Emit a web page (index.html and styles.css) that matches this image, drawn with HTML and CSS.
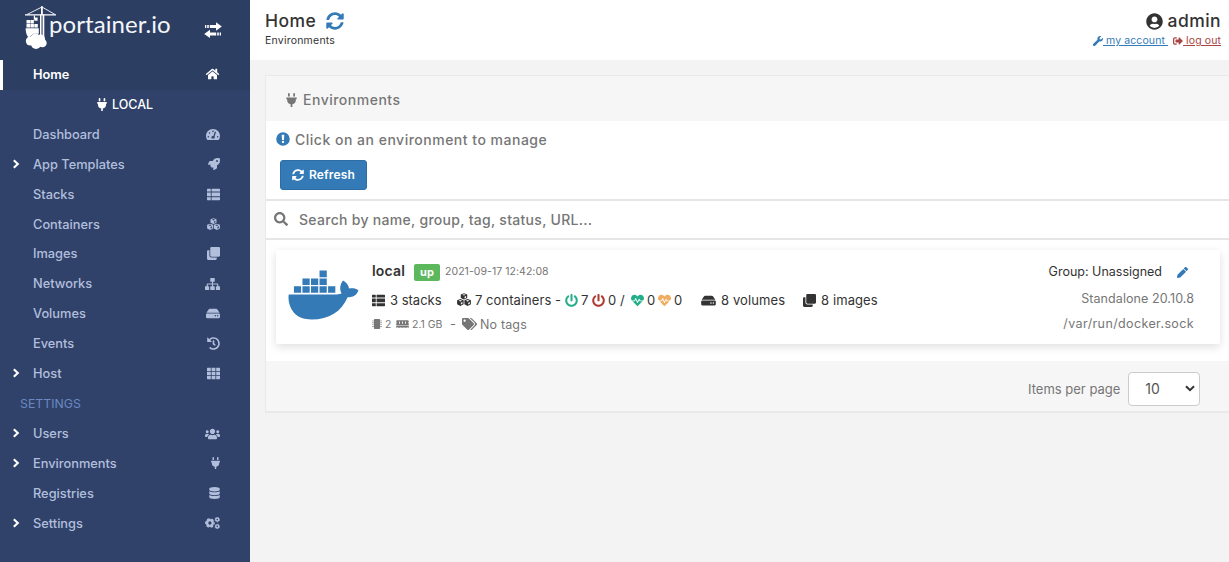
FILE: index.html
```
<!DOCTYPE html>
<html lang="en">
<head>
<meta charset="utf-8">
<title>Portainer</title>
<link rel="stylesheet" href="styles.css">
</head>
<body>
<svg class="defs" aria-hidden="true">
  <symbol id="home" viewBox="0 0 576 512"><path d="M280.37 148.26L96 300.11V464a16 16 0 0 0 16 16l112.06-.29a16 16 0 0 0 15.92-16V368a16 16 0 0 1 16-16h64a16 16 0 0 1 16 16v95.64a16 16 0 0 0 16 16.05L464 480a16 16 0 0 0 16-16V300L295.67 148.26a12.19 12.19 0 0 0-15.3 0zM571.6 251.47L488 182.56V44.05a12 12 0 0 0-12-12h-56a12 12 0 0 0-12 12v72.61L318.47 43a48 48 0 0 0-61 0L4.34 251.47a12 12 0 0 0-1.6 16.9l25.5 31A12 12 0 0 0 45.15 301l235.22-193.74a12.19 12.19 0 0 1 15.3 0L530.9 301a12 12 0 0 0 16.9-1.6l25.5-31a12 12 0 0 0-1.7-16.93z"/></symbol>
  <symbol id="plug" viewBox="0 0 384 512"><path d="M320 32a32 32 0 0 0-64 0v96h64zm48 128H16a16 16 0 0 0-16 16v32a16 16 0 0 0 16 16h16v32a160.07 160.07 0 0 0 128 156.8V512h64v-99.2A160.07 160.07 0 0 0 352 256v-32h16a16 16 0 0 0 16-16v-32a16 16 0 0 0-16-16zM128 32a32 32 0 0 0-64 0v96h64z"/></symbol>
  <symbol id="gauge" viewBox="0 0 576 512"><path fill-rule="evenodd" d="M288 32C129 32 0 161 0 320c0 53 14 102 39 145 6 10 16 15 27 15h444c11 0 21-5 27-15 25-43 39-92 39-145 0-159-129-288-288-288zM288 96a32 32 0 1 1 0 64 32 32 0 0 1 0-64zM96 384a32 32 0 1 1 0-64 32 32 0 0 1 0 64zM144 224a32 32 0 1 1 0-64 32 32 0 0 1 0 64zM480 320a32 32 0 1 1 0 64 32 32 0 0 1 0-64zM367 137l46 14-62 188c16 15 4 54-8 77H233c-20-37-5-95 55-96h17z"/></symbol>
  <symbol id="rocket" viewBox="0 0 512 512"><path d="M505.12 19.09c-1.19-5.53-6.66-11-12.21-12.19C460.716 0 435.507 0 410.407 0 307.175 0 245.269 55.2 199.05 128H94.838c-16.35 0-35.56 11.88-42.89 26.48L2.516 253.3A28.4 28.4 0 0 0 0 264a24 24 0 0 0 24 24h103.8l-22.47 22.47c-11.36 11.36-13 32.26 0 45.25l50.9 50.9c11.16 11.19 32.16 13.16 45.28 0L224 384.16V488a24 24 0 0 0 24 24 28.6 28.6 0 0 0 10.7-2.52l98.73-49.39c14.63-7.29 26.51-26.5 26.51-42.86V312.8C456.6 266.5 512 204.4 512 101.7c0-25.2 0-50.4-6.9-82.6zM384 168a40 40 0 1 1 40-40 40 40 0 0 1-40 40z"/></symbol>
  <symbol id="thlist" viewBox="0 0 512 512"><path d="M24 32h101a24 24 0 0 1 24 24v80H0V56a24 24 0 0 1 24-24zM181 32h307a24 24 0 0 1 24 24v80H181zM0 181h149v144H0zM181 181h331v144H181zM0 368h149v112H24a24 24 0 0 1-24-24zM181 368h331v88a24 24 0 0 1-24 24H181z"/></symbol>
  <symbol id="cubes" viewBox="0 0 512 512"><path fill-rule="evenodd" d="M256 6l118 46v134l-118 54-118-54V52zM256 44l-66 24 66 26 66-26zM276 134v64l56-26v-62zM122 222l120 46v144l-120 64-118-62V268zM122 260l-64 24 64 28 64-28zM142 352v70l58-32v-62zM390 222l118 46v144l-118 64-120-62V268zM390 260l-64 24 64 28 64-28zM410 352v70l58-32v-62z"/></symbol>
  <symbol id="clone" viewBox="0 0 512 512"><path d="M464 0c26.51 0 48 21.49 48 48v288c0 26.51-21.49 48-48 48H176c-26.51 0-48-21.49-48-48V48c0-26.51 21.49-48 48-48h288M176 416c-44.112 0-80-35.888-80-80V128H48c-26.51 0-48 21.49-48 48v288c0 26.51 21.49 48 48 48h288c26.51 0 48-21.49 48-48v-48H176z"/></symbol>
  <symbol id="sitemap" viewBox="0 0 640 512"><path d="M248 0h144a24 24 0 0 1 24 24v112a24 24 0 0 1-24 24h-48v72h184a40 40 0 0 1 40 40v80h48a24 24 0 0 1 24 24v112a24 24 0 0 1-24 24H488a24 24 0 0 1-24-24V376a24 24 0 0 1 24-24h32v-72H344v72h48a24 24 0 0 1 24 24v112a24 24 0 0 1-24 24H248a24 24 0 0 1-24-24V376a24 24 0 0 1 24-24h48v-72H120v72h32a24 24 0 0 1 24 24v112a24 24 0 0 1-24 24H24a24 24 0 0 1-24-24V376a24 24 0 0 1 24-24h48v-80a40 40 0 0 1 40-40h184v-72h-48a24 24 0 0 1-24-24V24a24 24 0 0 1 24-24z"/></symbol>
  <symbol id="hdd" viewBox="0 0 576 512"><path d="M576 304v96c0 26.51-21.49 48-48 48H48c-26.51 0-48-21.49-48-48v-96c0-26.51 21.49-48 48-48h480c26.51 0 48 21.49 48 48zm-48-80a79.557 79.557 0 0 1 30.777 6.165L462.25 85.374A48.003 48.003 0 0 0 422.311 64H153.689a48 48 0 0 0-39.938 21.374L17.223 230.165A79.557 79.557 0 0 1 48 224h480zm-48 96c-17.673 0-32 14.327-32 32s14.327 32 32 32 32-14.327 32-32-14.327-32-32-32zm-96 0c-17.673 0-32 14.327-32 32s14.327 32 32 32 32-14.327 32-32-14.327-32-32-32z"/></symbol>
  <symbol id="history" viewBox="0 0 512 512"><path d="M504 255.531c.253 136.64-111.18 248.372-247.82 248.468-59.015.042-113.223-20.53-155.822-54.911-11.077-8.94-11.905-25.541-1.839-35.607l11.267-11.267c8.609-8.609 22.353-9.551 31.891-1.984C173.062 425.135 212.781 440 256 440c101.705 0 184-82.311 184-184 0-101.705-82.311-184-184-184-48.814 0-93.149 18.969-126.068 49.932l50.754 50.754c10.08 10.08 2.941 27.314-11.313 27.314H24c-8.837 0-16-7.163-16-16V38.627c0-14.254 17.234-21.393 27.314-11.314l49.372 49.372C129.209 34.136 189.552 8 256 8c136.81 0 247.747 110.78 248 247.531zm-180.912 78.784l9.823-12.63c8.138-10.463 6.253-25.542-4.21-33.679L288 256.349V152c0-13.255-10.745-24-24-24h-16c-13.255 0-24 10.745-24 24v135.651l65.409 50.874c10.463 8.137 25.541 6.253 33.679-4.21z"/></symbol>
  <symbol id="grid" viewBox="0 0 512 512"><path d="M24 32h125v123H0V56a24 24 0 0 1 24-24zM181 32h150v123H181zM363 32h125a24 24 0 0 1 24 24v99H363zM0 187h149v138H0zM181 187h150v138H181zM363 187h149v138H363zM0 357h149v123H24a24 24 0 0 1-24-24zM181 357h150v123H181zM363 357h149v99a24 24 0 0 1-24 24H363z"/></symbol>
  <symbol id="users" viewBox="0 0 640 512"><path d="M96 224c35.3 0 64-28.7 64-64s-28.7-64-64-64-64 28.7-64 64 28.7 64 64 64zm448 0c35.3 0 64-28.7 64-64s-28.7-64-64-64-64 28.7-64 64 28.7 64 64 64zm32 32h-64c-17.6 0-33.5 7.1-45.1 18.6 40.3 22.1 68.9 62 75.1 109.4h66c17.7 0 32-14.3 32-32v-32c0-35.3-28.7-64-64-64zm-256 0c61.9 0 112-50.1 112-112S381.9 32 320 32 208 82.1 208 144s50.1 112 112 112zm76.8 32h-8.3c-20.8 10-43.9 16-68.5 16s-47.6-6-68.5-16h-8.3C179.6 288 128 339.6 128 403.2V432c0 26.5 21.5 48 48 48h288c26.5 0 48-21.5 48-48v-28.8c0-63.6-51.6-115.2-115.2-115.2zm-223.7-13.4C161.5 263.1 145.6 256 128 256H64c-35.3 0-64 28.7-64 64v32c0 17.7 14.3 32 32 32h65.9c6.3-47.4 34.9-87.3 75.2-109.4z"/></symbol>
  <symbol id="database" viewBox="0 0 448 512"><path d="M448 73.143v45.714C448 159.143 347.667 192 224 192S0 159.143 0 118.857V73.143C0 32.857 100.333 0 224 0s224 32.857 224 73.143zM448 176v102.857C448 319.143 347.667 352 224 352S0 319.143 0 278.857V176c48.125 33.143 136.208 48.572 224 48.572S399.874 209.143 448 176zm0 160v102.857C448 479.143 347.667 512 224 512S0 479.143 0 438.857V336c48.125 33.143 136.208 48.572 224 48.572S399.874 369.143 448 336z"/></symbol>
  <symbol id="cogs" viewBox="0 0 640 512"><g fill="none" stroke="currentColor"><circle cx="210" cy="256" r="120" stroke-width="100"/><circle cx="210" cy="256" r="184" stroke-width="48" stroke-dasharray="110 82.7" stroke-dashoffset="55"/><circle cx="524" cy="110" r="66" stroke-width="62"/><circle cx="524" cy="110" r="102" stroke-width="22" stroke-dasharray="60 46.8"/><circle cx="524" cy="402" r="66" stroke-width="62"/><circle cx="524" cy="402" r="102" stroke-width="22" stroke-dasharray="60 46.8"/></g></symbol>
  <symbol id="sync" viewBox="0 0 512 512"><path d="M370.72 133.28C339.458 104.008 298.888 87.962 255.848 88c-77.458.068-144.328 53.178-162.791 126.85-1.344 5.363-6.122 9.15-11.651 9.15H24.103c-7.498 0-13.194-6.807-11.807-14.176C33.933 94.924 134.813 8 256 8c66.448 0 126.791 26.136 171.315 68.685L463.03 40.97C478.149 25.851 504 36.559 504 57.941V192c0 13.255-10.745 24-24 24H345.941c-21.382 0-32.09-25.851-16.971-40.971l41.75-41.749zM32 296h134.059c21.382 0 32.09 25.851 16.971 40.971l-41.75 41.75c31.262 29.273 71.835 45.319 114.876 45.28 77.418-.07 144.315-53.144 162.787-126.849 1.344-5.363 6.122-9.15 11.651-9.15h57.304c7.498 0 13.194 6.807 11.807 14.176C478.067 417.076 377.187 504 256 504c-66.448 0-126.791-26.136-171.315-68.685L48.97 471.03C33.851 486.149 8 475.441 8 454.059V320c0-13.255 10.745-24 24-24z"/></symbol>
  <symbol id="search" viewBox="0 0 512 512"><path d="M505 442.7L405.3 343c-4.5-4.5-10.6-7-17-7H372c27.6-35.3 44-79.7 44-128C416 93.1 322.9 0 208 0S0 93.1 0 208s93.1 208 208 208c48.3 0 92.7-16.4 128-44v16.3c0 6.4 2.5 12.5 7 17l99.7 99.7c9.4 9.4 24.6 9.4 33.9 0l28.3-28.3c9.4-9.4 9.4-24.6.1-34zM208 336c-70.7 0-128-57.2-128-128 0-70.7 57.2-128 128-128 70.7 0 128 57.2 128 128 0 70.7-57.2 128-128 128z"/></symbol>
  <symbol id="power" viewBox="0 0 512 512"><path d="M400 54.1c63 45 104 118.6 104 201.9 0 136.8-110.8 247.7-247.5 248C120 504.3 8.2 393 8 256.4 7.9 173.1 48.9 99.3 111.8 54.2c11.7-8.3 28-4.8 35 7.7L162.6 90c5.9 10.5 3.1 23.8-6.6 31-41.5 30.8-68 79.6-68 134.9-.1 92.3 74.5 168.1 168 168.1 91.6 0 168.6-74.2 168-169.1-.3-51.8-24.7-101.8-68.1-134-9.7-7.2-12.4-20.5-6.5-30.9l15.8-28.1c7-12.4 23.2-16.1 34.8-7.8zM296 264V24c0-13.3-10.7-24-24-24h-32c-13.3 0-24 10.7-24 24v240c0 13.3 10.7 24 24 24h32c13.3 0 24-10.7 24-24z"/></symbol>
  <symbol id="heart" viewBox="0 0 512 512"><path d="M320.2 243.8l-49.7 99.4c-6 12.1-23.4 11.7-28.9-.6l-56.9-126.3-30 71.7H60.6l182.5 186.5c7.1 7.3 18.6 7.3 25.7 0L451.4 288H342.3l-22.1-44.2zM473.7 73.9l-2.4-2.5c-51.5-52.6-135.8-52.6-187.4 0L256 100l-27.9-28.5c-51.5-52.7-135.9-52.7-187.4 0l-2.4 2.4C-10.4 123.7-12.5 203 31 256h102.4l35.9-86.2c5.4-12.9 23.6-13.1 29.2-.4l58.2 129.3 49-97.9c5.9-11.8 22.7-11.8 28.6 0l27.6 55.2H481c43.5-53 41.4-132.3-7.3-182.1z"/></symbol>
  <symbol id="tags" viewBox="0 0 640 512"><path d="M497.941 225.941L286.059 14.059A48 48 0 0 0 252.118 0H48C21.49 0 0 21.49 0 48v204.118a48 48 0 0 0 14.059 33.941l211.882 211.882c18.744 18.745 49.136 18.746 67.882 0l204.118-204.118c18.745-18.745 18.745-49.137 0-67.882zM112 160c-26.51 0-48-21.49-48-48s21.49-48 48-48 48 21.49 48 48-21.49 48-48 48zm513.941 133.823L421.823 497.941c-18.745 18.745-49.137 18.745-67.882 0l-.36-.36L527.64 323.522c16.999-16.999 26.36-39.6 26.36-63.64s-9.362-46.641-26.36-63.64L331.397 0h48.721a48 48 0 0 1 33.941 14.059l211.882 211.882c18.745 18.745 18.745 49.137 0 67.882z"/></symbol>
  <symbol id="user" viewBox="0 0 496 512"><path d="M248 8C111 8 0 119 0 256s111 248 248 248 248-111 248-248S385 8 248 8zm0 96c48.6 0 88 39.4 88 88s-39.4 88-88 88-88-39.4-88-88 39.4-88 88-88zm0 344c-58.7 0-111.3-26.6-146.5-68.2 18.8-35.4 55.6-59.8 98.5-59.8 2.4 0 4.8.4 7.1 1.1 13 4.2 26.6 6.9 40.9 6.9 14.3 0 28-2.7 40.9-6.9 2.3-.7 4.7-1.1 7.1-1.1 42.9 0 79.7 24.4 98.5 59.8C359.3 421.4 306.7 448 248 448z"/></symbol>
  <symbol id="wrench" viewBox="0 0 512 512"><path d="M507.73 109.1c-2.24-9.03-13.54-12.09-20.12-5.51l-74.36 74.36-67.88-11.31-11.31-67.88 74.36-74.36c6.62-6.62 3.43-17.9-5.66-20.16-47.38-11.74-99.55.91-136.58 37.93-39.64 39.64-50.55 97.1-34.05 147.2L18.74 402.76c-24.99 24.99-24.99 65.51 0 90.5 24.99 24.99 65.51 24.99 90.5 0l213.21-213.21c50.12 16.71 107.47 5.68 147.37-34.22 37.07-37.07 49.7-89.32 37.91-136.73z"/></symbol>
  <symbol id="signout" viewBox="0 0 512 512"><path d="M497 273L329 441c-15 15-41 4.5-41-17v-96H152c-13.3 0-24-10.7-24-24v-96c0-13.3 10.7-24 24-24h136V88c0-21.4 25.9-32 41-17l168 168c9.3 9.4 9.3 24.6 0 34zM192 436v-40c0-6.6-5.4-12-12-12H96c-17.7 0-32-14.3-32-32V160c0-17.7 14.3-32 32-32h84c6.6 0 12-5.4 12-12V76c0-6.6-5.4-12-12-12H96c-53 0-96 43-96 96v192c0 53 43 96 96 96h84c6.6 0 12-5.4 12-12z"/></symbol>
  <symbol id="pencil" viewBox="0 0 512 512"><path d="M497.9 142.1l-46.1 46.1c-4.7 4.7-12.3 4.7-17 0l-111-111c-4.7-4.7-4.7-12.3 0-17l46.1-46.1c18.7-18.7 49.1-18.7 67.9 0l60.1 60.1c18.8 18.7 18.8 49.1 0 67.9zM284.2 99.8L21.6 362.4.4 483.9c-2.9 16.4 11.4 30.6 27.8 27.8l121.5-21.3 262.6-262.6c4.7-4.7 4.7-12.3 0-17l-111-111c-4.8-4.7-12.4-4.7-17.1 0z"/></symbol>
  <symbol id="alert" viewBox="0 0 512 512"><path fill-rule="evenodd" d="M256 8a248 248 0 1 1 0 496 248 248 0 0 1 0-496zM208 100h96l-12 192h-72zM256 318a44 44 0 1 1 0 88 44 44 0 0 1 0-88z"/></symbol>
  <symbol id="chip" viewBox="0 0 512 512"><path d="M144 0h224a48 48 0 0 1 48 48v416a48 48 0 0 1-48 48H144a48 48 0 0 1-48-48V48a48 48 0 0 1 48-48zM16 72h56v48H16zM16 168h56v48H16zM16 264h56v48H16zM16 360h56v48H16zM440 72h56v48h-56zM440 168h56v48h-56zM440 264h56v48h-56zM440 360h56v48h-56z"/></symbol>
  <symbol id="memory" viewBox="0 0 640 512"><path fill-rule="evenodd" d="M32 64h576l32 32v60a38 38 0 0 0 0 72v92H0v-92a38 38 0 0 0 0-72V96zM140 128v112h44V128zM298 128v112h44V128zM456 128v112h44V128zM0 344h640v104h-64v-40h-32v40H416v-40h-32v40H256v-40h-32v40H96v-40H64v40H0z"/></symbol>
  <symbol id="docker" viewBox="0 0 640 512"><path d="M349.9 236.3h-66.1v-59.4h66.1v59.4zm0-204.3h-66.1v60.7h66.1V32zm78.2 144.8H362v59.4h66.1v-59.4zm-156.3-72.1h-66.1v60.1h66.1v-60.1zm78.1 0h-66.1v60.1h66.1v-60.1zm276.8 100c-14.4-9.7-47.6-13.2-73.1-8.4-3.3-24-16.7-44.9-41.1-63.7l-14-9.3-9.3 14c-18.4 27.8-23.4 73.6-3.7 103.8-8.7 4.7-25.8 11.1-48.4 10.7H2.4c-8.7 50.8 5.8 116.8 44 162.1 37.1 43.9 92.7 66.2 165.4 66.2 157.4 0 273.9-72.5 328.4-204.2 21.4.4 67.6.1 91.3-45.2 1.5-2.5 6.6-13.2 8.5-17.1l-13.3-8.9zm-511.1-27.9h-66v59.4h66.1v-59.4zm78.1 0h-66.1v59.4h66.1v-59.4zm78.1 0h-66.1v59.4h66.1v-59.4zm-78.1-72.1h-66.1v60.1h66.1v-60.1z"/></symbol>
  <symbol id="chevron" viewBox="0 0 8 10"><path d="M1.8 1.2L5.8 5l-4 3.8" fill="none" stroke="currentColor" stroke-width="2.1"/></symbol>
</svg>

<div class="app">
  <aside class="sidebar">
    <div class="brand">
      <svg class="crane" viewBox="0 0 32 44" fill="currentColor">
        <path d="M0 8.2h31v1.4H0zM16 .3h1.8v8H16z"/>
        <path d="M17 1L2 8.5M17 1l13 7.5" fill="none" stroke="currentColor" stroke-width=".9"/>
        <path d="M15 8.5h1.5V30H15zM17.6 8.5h1.7V31h-1.7zM8.8 9.5h1.2v4H8.8z"/>
        <path d="M9.4 11.5h3.2v3.2H9.4zM1.5 14h3.5v3.6H1.5zM5.4 14h3.5v3.6H5.4zM1.5 18h3.5v3.6H1.5zM5.4 18h3.5v3.6H5.4zM9.3 18h3.5v3.6H9.3z"/>
        <path d="M.6 22.3h13.2v5.5H8.3L4 31.5C2 30.5.8 27 .6 22.3z"/>
        <circle cx="5.4" cy="35" r="4.6"/><circle cx="10.5" cy="32.5" r="5"/><circle cx="15.5" cy="33" r="4.6"/><circle cx="17.4" cy="37" r="4.3"/><circle cx="11" cy="38" r="5"/>
      </svg>
      <span class="wordmark">portainer.io</span>
      <svg class="toggle" viewBox="0 0 18 16" fill="currentColor"><path d="M1 3h1.3v3H1zM3.2 3h1.6v3H3.2zM5.8 3H12V.2L17.8 4.5 12 8.8V6H5.8zM17 10.5h-1.3v3H17zM14.8 10.5h-1.6v3h1.6zM12.2 10.5H6V7.7L.2 12 6 16v-2.5h6.2z"/></svg>
    </div>
    <nav class="nav">
      <a class="item active"><span>Home</span><svg class="ico w16"><use href="#home"/></svg></a>
      <div class="endpoint"><svg><use href="#plug"/></svg><span>LOCAL</span></div>
      <a class="item"><span>Dashboard</span><svg class="ico w14"><use href="#gauge"/></svg></a>
      <a class="item"><svg class="chev"><use href="#chevron"/></svg><span>App Templates</span><svg class="ico"><use href="#rocket"/></svg></a>
      <a class="item"><span>Stacks</span><svg class="ico w13"><use href="#thlist"/></svg></a>
      <a class="item"><span>Containers</span><svg class="ico w13"><use href="#cubes"/></svg></a>
      <a class="item"><span>Images</span><svg class="ico w13"><use href="#clone"/></svg></a>
      <a class="item"><span>Networks</span><svg class="ico w16"><use href="#sitemap"/></svg></a>
      <a class="item"><span>Volumes</span><svg class="ico w14"><use href="#hdd"/></svg></a>
      <a class="item"><span>Events</span><svg class="ico w13"><use href="#history"/></svg></a>
      <a class="item"><svg class="chev"><use href="#chevron"/></svg><span>Host</span><svg class="ico w13"><use href="#grid"/></svg></a>
      <div class="section">SETTINGS</div>
      <a class="item"><svg class="chev"><use href="#chevron"/></svg><span>Users</span><svg class="ico w16"><use href="#users"/></svg></a>
      <a class="item"><svg class="chev"><use href="#chevron"/></svg><span>Environments</span><svg class="ico w9"><use href="#plug"/></svg></a>
      <a class="item"><span>Registries</span><svg class="ico w11"><use href="#database"/></svg></a>
      <a class="item"><svg class="chev"><use href="#chevron"/></svg><span>Settings</span><svg class="ico w16"><use href="#cogs"/></svg></a>
    </nav>
  </aside>

  <main class="content">
    <header class="header">
      <div class="title">
        <h1><span>Home</span><svg><use href="#sync"/></svg></h1>
        <div class="crumb">Environments</div>
      </div>
      <div class="account">
        <div class="name"><svg><use href="#user"/></svg><span>admin</span></div>
        <div class="links">
          <a class="mine"><svg><use href="#wrench"/></svg><u>&nbsp;my account&nbsp;</u></a>
          <a class="logout"><svg><use href="#signout"/></svg><u>&nbsp;log out</u></a>
        </div>
      </div>
    </header>

    <section class="panel">
      <div class="panel-head"><svg><use href="#plug"/></svg><span>Environments</span></div>
      <div class="actions">
        <div class="hint"><svg><use href="#alert"/></svg><span>Click on an environment to manage</span></div>
        <button class="refresh"><svg><use href="#sync"/></svg><span>Refresh</span></button>
      </div>
      <div class="searchbar"><svg><use href="#search"/></svg><span>Search by name, group, tag, status, URL...</span></div>
      <div class="list">
        <article class="env">
          <svg class="whale"><use href="#docker"/></svg>
          <div class="info">
            <div class="row first"><b>local</b><span class="badge">up</span><span class="date">2021-09-17 12:42:08</span></div>
            <div class="row stats">
              <span class="stat stacks"><svg><use href="#thlist"/></svg><span>3 stacks</span></span>
              <span class="stat containers"><svg><use href="#cubes"/></svg><span>7 containers -</span></span>
              <span class="count"><svg class="green"><use href="#power"/></svg>7</span>
              <span class="count"><svg class="red"><use href="#power"/></svg>0</span>
              <span class="slash">/</span>
              <span class="count"><svg class="green"><use href="#heart"/></svg>0</span>
              <span class="count"><svg class="orange"><use href="#heart"/></svg>0</span>
              <span class="stat volumes"><svg><use href="#hdd"/></svg><span>8 volumes</span></span>
              <span class="stat images"><svg><use href="#clone"/></svg><span>8 images</span></span>
            </div>
            <div class="row meta">
              <svg class="chip"><use href="#chip"/></svg><span class="cpu">2</span>
              <svg class="mem"><use href="#memory"/></svg><span class="ram">2.1 GB</span>
              <span class="dash">-</span>
              <svg class="tag"><use href="#tags"/></svg><span class="notags">No tags</span>
            </div>
          </div>
          <div class="side">
            <div class="group"><span>Group: Unassigned</span><svg><use href="#pencil"/></svg></div>
            <div class="standalone">Standalone 20.10.8</div>
            <div class="sock">/var/run/docker.sock</div>
          </div>
        </article>
      </div>
      <footer class="pager"><span>Items per page</span><div class="select"><span>10</span><svg viewBox="0 0 10 7"><path d="M1 1.2l4 4 4-4" fill="none" stroke="currentColor" stroke-width="2"/></svg></div></footer>
    </section>
  </main>
</div>
</body>
</html>
```
FILE: styles.css
```
* { box-sizing: border-box; }
body { margin: 0; font-family: Inter, "Open Sans", sans-serif; font-size: 13px; color: #333; background: #f3f3f3; overflow: hidden; }
svg { fill: currentColor; display: block; flex: none; }
span, a, b, u { white-space: nowrap; }
.defs { position: absolute; width: 0; height: 0; }
.app { display: flex; width: 1229px; height: 562px; overflow: hidden; }

.sidebar { width: 250px; flex: none; background: #30426a; color: #b2bfdc; }
.brand { height: 60px; display: flex; align-items: flex-start; padding: 6px 28px 0 25px; background: #2d3e63; color: #fff; }
.crane { width: 32px; height: 44px; }
.wordmark { font-family: Lato, sans-serif; font-size: 24px; line-height: 32px; margin: 2px 0 0 -8px; letter-spacing: .06px; font-weight: 400; color: #f4f6fa; width: 122px; }
.toggle { width: 18px; height: 16px; margin: 16px 0 0 auto; }
.item { height: 29.93px; display: flex; align-items: center; padding: 0 30px 1px 33px; position: relative; font-weight: 500; font-size: 12.8px; }
.item .ico { width: 12px; height: 12px; margin-left: auto; }
.item .w16 { width: 15px; height: 12px; }
.item .w14 { width: 14px; height: 13px; }
.item .w13 { width: 13px; height: 13px; }
.item .w11 { width: 11px; }
.item .w9 { width: 9px; }
.active { background: #2d3e63; border-left: 3px solid #fff; padding-left: 30px; color: #fff; font-weight: 600; }
.chev { position: absolute; left: 12px; top: 9px; width: 8px; height: 10px; color: #fff; }
.endpoint { height: 29.93px; display: flex; align-items: center; justify-content: center; gap: 5px; padding-bottom: 1px; color: #fff; font-weight: 500; font-size: 12.5px; }
.endpoint svg { width: 10px; height: 13px; }
.section { height: 29.93px; line-height: 29px; padding-left: 20px; color: #6b88c2; font-size: 12.3px; }

.content { flex: 1; min-width: 0; }
.header { height: 60px; background: #fff; display: flex; justify-content: space-between; padding: 0 8px 0 15px; }
.title h1 { margin: 10px 0 0; font-size: 17.5px; line-height: 22px; font-weight: 500; letter-spacing: .45px; display: flex; align-items: center; gap: 10px; }
.title h1 svg { width: 18px; height: 18px; color: #337ab7; }
.crumb { font-size: 10.5px; line-height: 17px; letter-spacing: .22px; }
.name { display: flex; justify-content: flex-end; align-items: center; gap: 5px; margin-top: 10px; line-height: 22px; font-size: 17.5px; font-weight: 500; letter-spacing: .45px; }
.name svg { width: 17px; height: 17px; }
.links { display: flex; gap: 5px; font-size: 10.5px; line-height: 17px; letter-spacing: .1px; }
.links a { display: flex; align-items: center; }
.links svg { width: 10px; height: 10px; }
.mine { color: #337ab7; }
.logout { color: #a94442; }

.panel { margin: 15px 0 0 15px; width: 980px; border: 1px solid #e9e9e9; border-bottom-width: 2px; background: #fff; color: #767676; }
.panel-head { height: 45px; background: #f6f6f6; display: flex; align-items: center; gap: 6px; padding: 2px 0 0 20px; font-size: 14px; font-weight: 500; letter-spacing: .5px; }
.panel-head svg { width: 11px; height: 14px; }
.actions { height: 80px; border-bottom: 2px solid #e6e6e6; padding: 9px 0 0 10px; }
.hint { display: flex; align-items: center; gap: 5px; height: 18px; font-size: 14px; font-weight: 500; letter-spacing: .5px; }
.hint svg { width: 14px; height: 14px; color: #337ab7; }
.refresh { margin: 12px 0 0 4px; width: 87px; height: 30px; display: flex; align-items: center; justify-content: center; gap: 5px; padding: 0 0 1px; border: 1px solid #2e6da4; border-radius: 3px; background: #337ab7; color: #fff; font: 600 12px Inter, sans-serif; letter-spacing: .15px; }
.refresh svg { width: 12px; height: 12px; }
.searchbar { height: 39px; border-bottom: 2px solid #e6e6e6; display: flex; align-items: center; gap: 11px; padding: 0 0 1px 8px; font-size: 14px; font-weight: 500; letter-spacing: .29px; }
.searchbar svg { width: 14px; height: 14px; }
.list { height: 121px; padding: 10px 14px 0 10px; }
.env { width: 944px; height: 94px; background: #fff; border-radius: 2px; box-shadow: 0 3px 10px rgba(0,0,0,.13); display: flex; padding: 0 26px 0 12px; }
.whale { width: 71px; height: 56px; margin-top: 17px; color: #337ab7; }
.info { margin-left: 13px; flex: 1; color: #333; }
.row { display: flex; align-items: center; }
.first { height: 22px; margin-top: 9px; }
.first b { font-size: 14px; font-weight: 600; width: 42px; letter-spacing: .2px; }
.badge { background: #5cb85c; color: #fff; width: 26px; height: 17px; margin-top: 4px; border-radius: 2px; font-size: 11px; line-height: 16px; text-align: center; font-weight: 700; }
.date { margin: 2px 0 0 5px; font-size: 10.5px; letter-spacing: .05px; color: #767676; }
.stats { height: 24px; margin-top: 7px; font-size: 13px; }
.stat { display: flex; align-items: center; gap: 5px; }
.stat svg { width: 13px; height: 13px; }
.stacks { width: 85px; }
.containers { width: 108px; }
.containers svg { width: 14px; height: 14px; }
.containers { gap: 4px; letter-spacing: .05px; }
.count { display: flex; align-items: center; gap: 3px; width: 27px; }
.count svg { width: 13px; height: 13px; }
.green { color: #23ae89; }
.red { color: #ae3a32; }
.orange { color: #f0ad60; }
.slash { width: 12px; padding-left: 1px; }
.count + .volumes { margin-left: 16px; width: 102px; }
.volumes, .images { letter-spacing: .1px; }
.stats .volumes svg { width: 15px; }
.meta { height: 20px; margin-top: 2px; color: #767676; font-size: 10.5px; }
.chip { width: 10px; height: 10px; }
.cpu { width: 14px; padding-left: 3px; }
.mem { width: 13px; height: 10px; }
.ram { width: 41px; padding-left: 3px; }
.dash { width: 12px; font-size: 13px; }
.tag { width: 15px; height: 12px; }
.notags { margin-left: 3px; font-size: 12.5px; letter-spacing: .15px; }
.side { width: 180px; display: flex; flex-direction: column; align-items: flex-end; font-size: 12.5px; line-height: 16px; }
.group { display: flex; align-items: center; gap: 15px; margin: 14px 6px 0 0; color: #333; }
.group svg { width: 11px; height: 11px; color: #337ab7; }
.standalone { margin-top: 11px; letter-spacing: .08px; }
.sock { margin-top: 9px; letter-spacing: .38px; }
.pager { height: 50px; background: #f6f6f6; display: flex; align-items: center; padding: 5px 0 0 762px; font-size: 13px; }
.select { width: 72px; height: 34px; margin-left: 8px; border: 1px solid #ccc; border-radius: 4px; background: #fff; display: flex; align-items: center; justify-content: space-between; padding: 0 4px 0 16px; font-size: 14px; color: #555; }
.select svg { width: 10px; height: 7px; color: #333; }
```
